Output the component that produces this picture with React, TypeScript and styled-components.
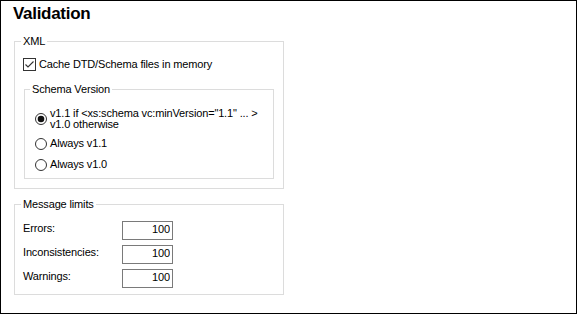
import React from 'react';
import styled, { createGlobalStyle } from 'styled-components';

const GlobalStyle = createGlobalStyle`
  html, body {
    margin: 0;
    padding: 0;
    background: #fff;
  }
  body {
    font-family: "Liberation Sans", Arial, sans-serif;
  }
`;

const Frame = styled.div`
  width: 577px;
  height: 314px;
  box-sizing: border-box;
  border: 1px solid #000;
  background: #fff;
  padding: 2px 0 0 13px;
  color: #000;
  font-size: 11px;
  letter-spacing: -0.15px;
`;

const Title = styled.h1`
  margin: 0 0 10px -1px;
  font-size: 17px;
  font-weight: bold;
  line-height: 22px;
  letter-spacing: -0.3px;
`;

interface GroupProps {
  $width: number;
  $height: number;
  $inset: number;
  $top: number;
}

const Group = styled.fieldset<GroupProps>`
  margin: 0;
  min-width: 0;
  box-sizing: border-box;
  width: ${({ $width }) => $width}px;
  height: ${({ $height }) => $height}px;
  border: 1px solid #dcdcdc;
  padding: ${({ $top }) => $top}px 0 0 ${({ $inset }) => $inset}px;
`;

const Caption = styled.legend<{ $shift: number }>`
  padding: 0 2px;
  margin-left: ${({ $shift }) => $shift}px;
  font-size: 11px;
  line-height: 13px;
`;

const Nested = styled.div`
  margin: 12px 0 0 1px;
`;

const Spaced = styled.div`
  margin-top: 9px;
`;

const CheckRow = styled.label`
  display: flex;
  align-items: center;
  gap: 3px;
  height: 13px;
  line-height: 13px;
`;

const RadioList = styled.div`
  display: flex;
  flex-direction: column;
  gap: 8px;
`;

const RadioItem = styled.label`
  display: flex;
  align-items: center;
  gap: 3px;
`;

const RadioText = styled.span<{ $tight?: boolean }>`
  line-height: ${({ $tight }) => ($tight ? '10.5px' : '13px')};
`;

const Limits = styled.div`
  display: grid;
  grid-template-columns: 99px 51px;
  row-gap: 5px;
  align-items: start;
`;

const LimitLabel = styled.span`
  line-height: 15px;
`;

const NumberBox = styled.input`
  width: 51px;
  height: 19px;
  box-sizing: border-box;
  margin: 0;
  border: 1px solid #7a7a7a;
  border-radius: 0;
  padding: 0 2px 3px 2px;
  font: inherit;
  font-size: 11px;
  letter-spacing: -0.15px;
  color: #000;
  text-align: right;
  outline: none;
`;

const CheckBox = ({ checked }: { checked: boolean }) => (
  <svg width="13" height="13" viewBox="0 0 13 13">
    <rect x="0.5" y="0.5" width="12" height="12" fill="#fff" stroke="#333" />
    {checked && (
      <path d="M2.5 6.5 L5 9 L10.5 3.5" fill="none" stroke="#333" strokeWidth="1.1" />
    )}
  </svg>
);

const Radio = ({ checked }: { checked: boolean }) => (
  <svg width="12" height="12" viewBox="0 0 12 12" style={{ flexShrink: 0 }}>
    <circle cx="6" cy="6" r="5.5" fill="#fff" stroke="#333" />
    {checked && <circle cx="6" cy="6" r="3.3" fill="#111" />}
  </svg>
);

const limits = [
  { label: 'Errors:', value: '100' },
  { label: 'Inconsistencies:', value: '100' },
  { label: 'Warnings:', value: '100' },
];

export default function App() {
  return (
    <>
      <GlobalStyle />
      <Frame>
        <Title>Validation</Title>

        <Group $width={270} $height={154} $inset={8} $top={10}>
          <Caption $shift={-2}>XML</Caption>
          <CheckRow>
            <CheckBox checked />
            <span>Cache DTD/Schema files in memory</span>
          </CheckRow>

          <Nested>
            <Group $width={250} $height={96} $inset={10} $top={12}>
              <Caption $shift={-5}>Schema Version</Caption>
              <RadioList>
                <RadioItem>
                  <Radio checked />
                  <RadioText $tight>
                    v1.1 if &lt;xs:schema vc:minVersion="1.1" ... &gt;
                    <br />
                    v1.0 otherwise
                  </RadioText>
                </RadioItem>
                <RadioItem>
                  <Radio checked={false} />
                  <RadioText>Always v1.1</RadioText>
                </RadioItem>
                <RadioItem>
                  <Radio checked={false} />
                  <RadioText>Always v1.0</RadioText>
                </RadioItem>
              </RadioList>
            </Group>
          </Nested>
        </Group>

        <Spaced>
          <Group $width={270} $height={97} $inset={8} $top={10}>
            <Caption $shift={-2}>Message limits</Caption>
            <Limits>
              {limits.map((l) => (
                <React.Fragment key={l.label}>
                  <LimitLabel>{l.label}</LimitLabel>
                  <NumberBox readOnly value={l.value} />
                </React.Fragment>
              ))}
            </Limits>
          </Group>
        </Spaced>
      </Frame>
    </>
  );
}
